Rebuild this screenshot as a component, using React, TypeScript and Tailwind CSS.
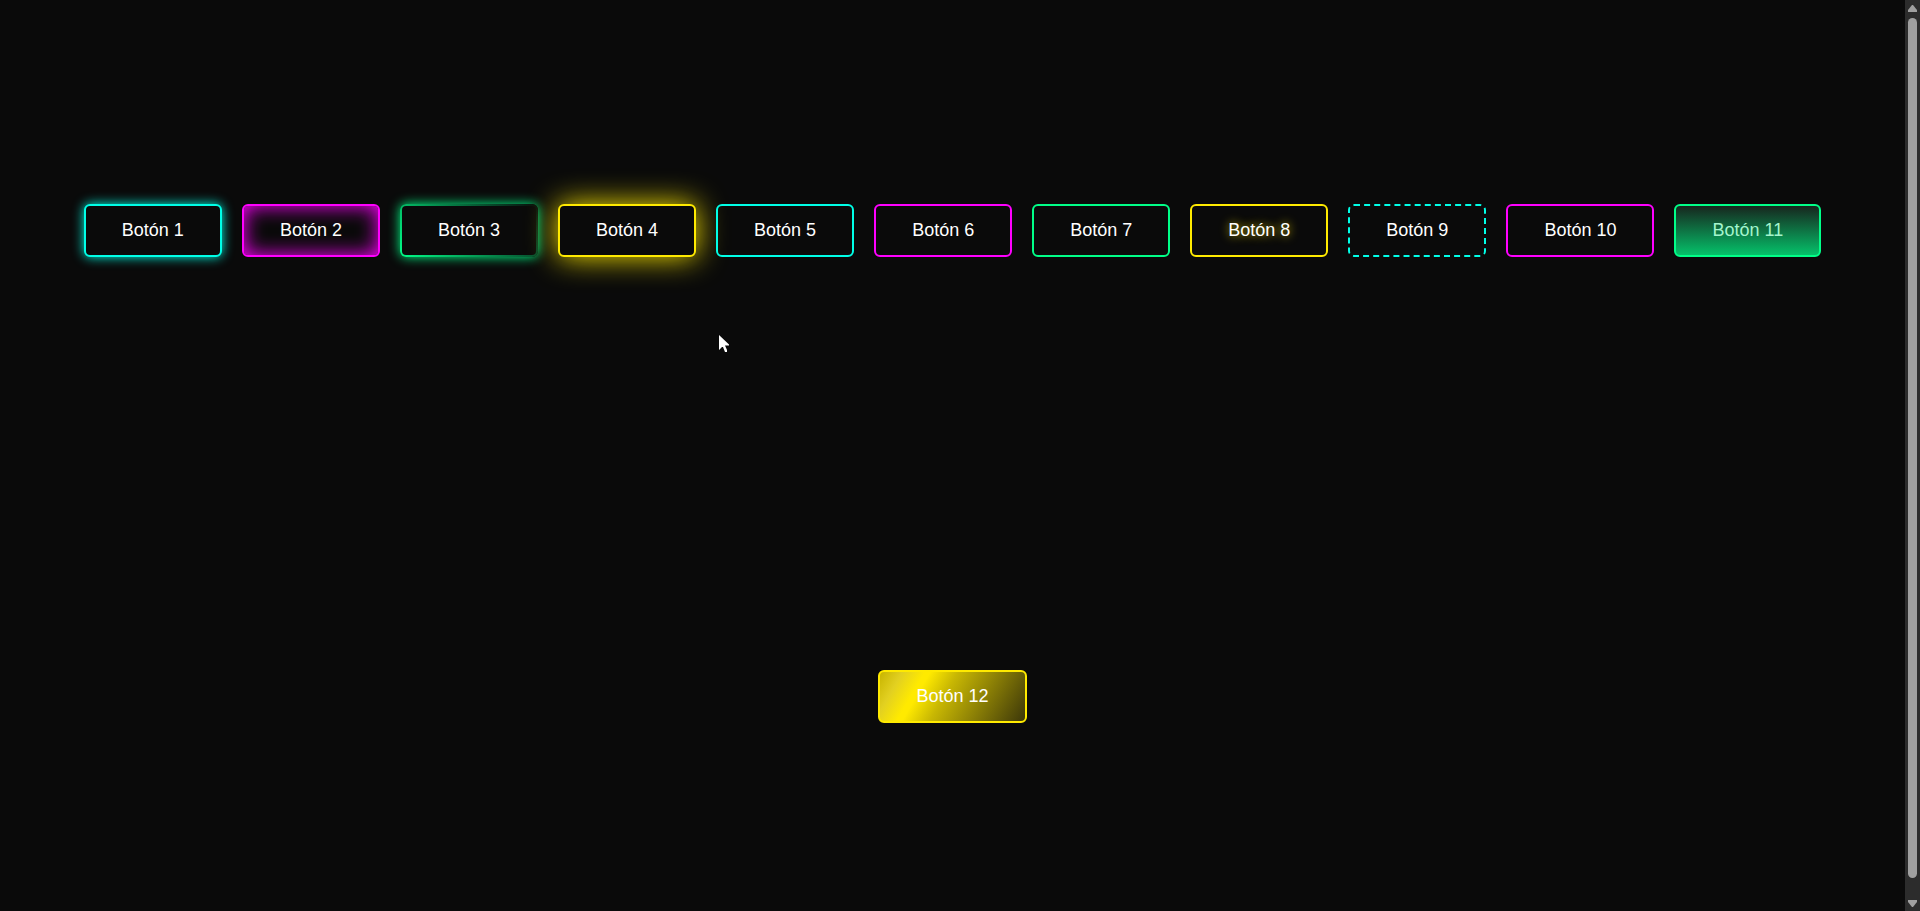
const base =
  "cursor-pointer rounded-[6px] border-2 px-9 py-[14px] text-[18px] leading-[21px]";

const buttons: { label: string; style: string }[] = [
  { label: "Botón 1", style: "text-white border-[#00ffe7] bg-[#0a0a0a] shadow-[0_0_12px_#00ffe7]" },
  { label: "Botón 2", style: "text-white border-[#ff00ff] shadow-[inset_0_0_20px_#ff00ff]" },
  {
    label: "Botón 3",
    style:
      "text-white border-transparent bg-[linear-gradient(#0a0a0a,#0a0a0a),linear-gradient(45deg,#00ff88,#0a0a0a)] [background-clip:padding-box,border-box] [background-origin:padding-box,border-box] shadow-[0_0_12px_#00ff88]",
  },
  { label: "Botón 4", style: "text-white border-[#ffea00] bg-[#0a0a0a] shadow-[0_0_30px_#ffea00]" },
  { label: "Botón 5", style: "text-white border-[#00ffe7]" },
  { label: "Botón 6", style: "text-white border-[#ff00ff]" },
  { label: "Botón 7", style: "text-white border-[#00ff88]" },
  { label: "Botón 8", style: "text-white border-[#ffea00] [text-shadow:0_0_10px_#ffea00cc]" },
  { label: "Botón 9", style: "text-white border-dashed border-[#00ffe7]" },
  { label: "Botón 10", style: "text-white border-[#ff00ff]" },
  {
    label: "Botón 11",
    style: "border-[#00ff88] bg-[linear-gradient(to_top,#05c16a,#17261e)] text-[#a4f5cd]",
  },
  {
    label: "Botón 12",
    style:
      "text-white border-[#ffea00] bg-[linear-gradient(120deg,#c8b400_0%,#e2d021_13%,#ffea00_26%,#ffea00_29%,#c8b703_45%,#3c3709_100%)]",
  },
];

function Scrollbar() {
  return (
    <div aria-hidden="true" className="flex w-[15px] shrink-0 flex-col items-center bg-[#2c2c2c]">
      <svg className="h-[18px] w-[15px]" viewBox="0 0 15 18">
        <path d="M7 5h1l4 5v2H3v-2z" fill="#9f9f9f" />
      </svg>
      <div className="w-[9px] flex-1 rounded-full bg-[#9f9f9f]" />
      <svg className="h-[33px] w-[15px]" viewBox="0 0 15 33">
        <path d="M3 22h9v2l-4 5H7l-4-5z" fill="#9f9f9f" />
      </svg>
    </div>
  );
}

function Pointer() {
  return (
    <svg
      aria-hidden="true"
      className="pointer-events-none absolute top-[335px] left-[718px] h-[18px] w-[12px]"
      viewBox="0 0 12 18"
    >
      <path d="M1 0v15l3-3h1l2 5h2v-2l-2-4.500h4v-1z" fill="#fff" />
    </svg>
  );
}

export default function App() {
  return (
    <div className="relative flex h-screen overflow-hidden bg-[#0a0a0a] font-['Liberation_Sans',Arial,sans-serif]">
      <div className="min-w-0 flex-1">
        <main className="m-2 flex min-h-screen flex-wrap content-stretch items-center justify-center gap-5">
          {buttons.map(({ label, style }) => (
            <button key={label} type="button" className={`${base} ${style}`}>
              {label}
            </button>
          ))}
        </main>
      </div>
      <Scrollbar />
      <Pointer />
    </div>
  );
}
